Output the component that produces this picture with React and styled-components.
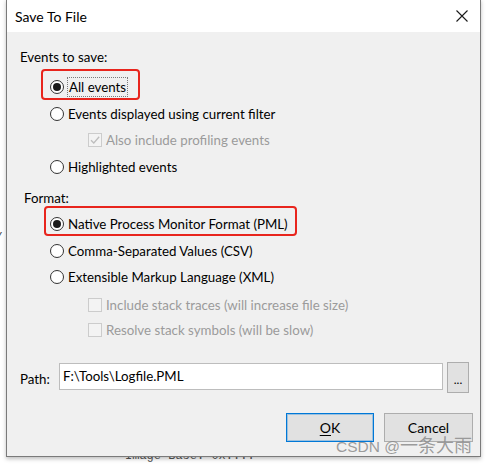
import React from "react";
import styled, { createGlobalStyle, css } from "styled-components";

const GlobalStyle = createGlobalStyle`
  html, body {
    margin: 0;
    padding: 0;
    background: #fff;
  }
  body {
    font-family: Lato, "Liberation Sans", sans-serif;
  }
`;

const Screen = styled.div`
  position: relative;
  width: 488px;
  height: 464px;
  overflow: hidden;
  background: #fff;
`;

const BackdropText = styled.span`
  position: absolute;
  left: ${(p) => p.$x}px;
  top: ${(p) => p.$y}px;
  font-family: "Liberation Mono", monospace;
  font-size: 12px;
  color: #555;
  white-space: pre;
`;

const Dialog = styled.div`
  position: relative;
  z-index: 1;
  margin: -1px 0 0 6px;
  width: 475px;
  height: 458px;
  box-sizing: border-box;
  border: 1px solid #7a7a7a;
  box-shadow: 0 2px 4px rgba(0, 0, 0, 0.25);
  display: flex;
  flex-direction: column;
  background: #f0f0f0;
`;

const TitleBar = styled.div`
  height: 32px;
  flex: none;
  background: #fff;
  display: flex;
  align-items: center;
  justify-content: space-between;
  padding: 0 12px 0 8px;
  font-size: 14px;
  color: #000;
`;

const Body = styled.div`
  flex: 1;
  display: flex;
  flex-direction: column;
  padding: 15px 11px 0 13px;
  font-size: 13.3px;
`;

const Label = styled.div`
  height: 20px;
  line-height: 20px;
  margin-top: ${(p) => p.$gap || 0}px;
  margin-left: ${(p) => p.$indent || 0}px;
  color: #000;
`;

const Row = styled.div`
  position: relative;
  display: flex;
  align-items: center;
  gap: 4px;
  width: fit-content;
  height: 20px;
  margin-top: ${(p) => p.$gap || 0}px;
  margin-left: ${(p) => p.$indent || 0}px;
  color: ${(p) => (p.$disabled ? "#9b9b9b" : "#000")};
  ${(p) =>
    p.$mark &&
    css`
      &::after {
        content: "";
        position: absolute;
        inset: ${p.$mark};
        border: 2.5px solid #e8251d;
        border-radius: 4px;
        pointer-events: none;
      }
    `}
`;

const Radio = styled.span`
  flex: none;
  width: 14px;
  height: 14px;
  box-sizing: border-box;
  border: 1px solid #333;
  border-radius: 50%;
  background: #fff;
  display: flex;
  align-items: center;
  justify-content: center;
  &::before {
    content: "";
    display: ${(p) => (p.$checked ? "block" : "none")};
    width: 8px;
    height: 8px;
    border-radius: 50%;
    background: #1a1a1a;
  }
`;

const Check = styled.span`
  flex: none;
  width: 14px;
  height: 14px;
  box-sizing: border-box;
  border: 1px solid #cccccc;
  background: #f3f3f3;
  display: flex;
  align-items: center;
  justify-content: center;
`;

const Focused = styled.span`
  outline: 1px dotted #7a7a7a;
  outline-offset: 0;
  padding: 0 1px;
  line-height: 18px;
`;

const PathRow = styled.div`
  display: flex;
  align-items: center;
  margin-top: 22px;
  height: 32px;
`;

const PathLabel = styled.span`
  width: 39px;
  flex: none;
  padding-top: 2px;
`;

const PathInput = styled.div`
  flex: 1;
  height: 27px;
  box-sizing: border-box;
  border: 1px solid #bdbdbd;
  background: #fff;
  padding: 2px 3px 0;
  line-height: 20px;
  margin-right: 4px;
  align-self: flex-start;
  margin-top: 1px;
`;

const BrowseButton = styled.div`
  width: 22px;
  height: 31px;
  box-sizing: border-box;
  border: 1px solid #adadad;
  background: #e1e1e1;
  display: flex;
  align-items: center;
  justify-content: center;
  font-size: 12px;
  line-height: 1;
  padding-top: 4px;
  align-self: flex-start;
`;

const ButtonRow = styled.div`
  display: flex;
  justify-content: flex-end;
  gap: 10px;
  margin: 19px -4px 0 0;
`;

const Button = styled.div`
  width: ${(p) => p.$w}px;
  height: 29px;
  box-sizing: border-box;
  background: #e1e1e1;
  border: 1px solid ${(p) => (p.$default ? "#0078d7" : "#adadad")};
  box-shadow: ${(p) =>
    p.$default ? "inset 0 0 0 1px rgba(0, 120, 215, 0.3)" : "none"};
  display: flex;
  align-items: center;
  justify-content: center;
  font-size: 14px;
  color: #000;
  u {
    text-decoration: underline;
    text-underline-offset: 2px;
  }
`;

const Watermark = styled.span`
  position: absolute;
  z-index: 2;
  left: 336px;
  top: 435px;
  font-family: "Liberation Sans", "Noto Sans CJK SC", sans-serif;
  font-size: 15.5px;
  color: rgba(140, 140, 140, 0.85);
  white-space: nowrap;
  display: flex;
  align-items: baseline;
`;

const WatermarkCjk = styled.span`
  font-family: "Noto Sans CJK SC", sans-serif;
  font-size: 18px;
  line-height: 1;
`;

const CloseIcon = () => (
  <svg width="12" height="12" viewBox="0 0 12 12">
    <path d="M0.5 0.5 L11.5 11.5 M11.5 0.5 L0.5 11.5" stroke="#1a1a1a" strokeWidth="1.1" fill="none" />
  </svg>
);

const CheckMark = () => (
  <svg width="12" height="12" viewBox="0 0 12 12">
    <path d="M2 6.2 L4.8 9 L10.2 2.8" stroke="#bdbdbd" strokeWidth="1.3" fill="none" />
  </svg>
);

const RadioOption = ({ checked, gap, mark, children }) => (
  <Row $gap={gap} $indent={30} $mark={mark}>
    <Radio $checked={checked} />
    {children}
  </Row>
);

const CheckOption = ({ checked, gap, children }) => (
  <Row $gap={gap} $indent={68} $disabled>
    <Check>{checked ? <CheckMark /> : null}</Check>
    {children}
  </Row>
);

export default function App() {
  return (
    <Screen>
      <GlobalStyle />
      <BackdropText $x={126} $y={-10}>Image Base: 0x....</BackdropText>
      <BackdropText $x={-5} $y={231}>Y</BackdropText>
      <BackdropText $x={125} $y={449}>Image Base: 0x....</BackdropText>
      <Dialog>
        <TitleBar>
          <span>Save To File</span>
          <CloseIcon />
        </TitleBar>
        <Body>
          <Label>Events to save:</Label>
          <RadioOption checked gap={10} mark="-8px -13px -3px -9px">
            <Focused>All events</Focused>
          </RadioOption>
          <RadioOption gap={7}>Events displayed using current filter</RadioOption>
          <CheckOption checked gap={6}>Also include profiling events</CheckOption>
          <RadioOption gap={7}>Highlighted events</RadioOption>
          <Label $gap={11} $indent={4}>Format:</Label>
          <RadioOption checked gap={6} mark="-8px -9px -2px -6px">
            Native Process Monitor Format (PML)
          </RadioOption>
          <RadioOption gap={7}>Comma-Separated Values (CSV)</RadioOption>
          <RadioOption gap={6}>Extensible Markup Language (XML)</RadioOption>
          <CheckOption gap={8}>Include stack traces (will increase file size)</CheckOption>
          <CheckOption gap={5}>Resolve stack symbols (will be slow)</CheckOption>
          <PathRow>
            <PathLabel>Path:</PathLabel>
            <PathInput>F:\Tools\Logfile.PML</PathInput>
            <BrowseButton>...</BrowseButton>
          </PathRow>
          <ButtonRow>
            <Button $w={88} $default>
              <span>
                <u>O</u>K
              </span>
            </Button>
            <Button $w={89}>Cancel</Button>
          </ButtonRow>
        </Body>
      </Dialog>
      <Watermark>
        CSDN @<WatermarkCjk>一条大雨</WatermarkCjk>
      </Watermark>
    </Screen>
  );
}
